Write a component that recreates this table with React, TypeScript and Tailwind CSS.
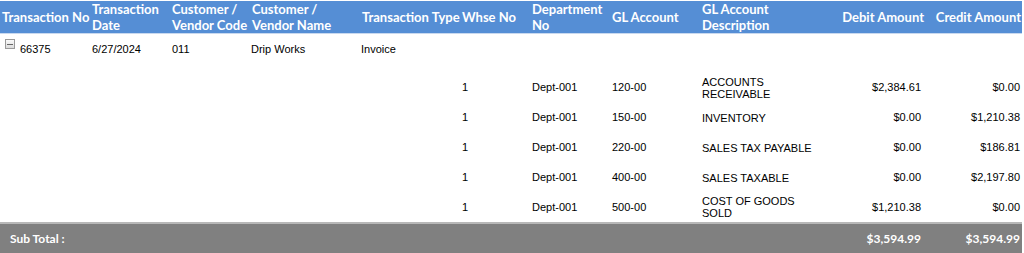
import React from 'react';

interface Line {
  whse: string;
  dept: string;
  gl: string;
  desc: string;
  debit: string;
  credit: string;
}

const lines: Line[] = [
  { whse: '1', dept: 'Dept-001', gl: '120-00', desc: 'ACCOUNTS RECEIVABLE', debit: '$2,384.61', credit: '$0.00' },
  { whse: '1', dept: 'Dept-001', gl: '150-00', desc: 'INVENTORY', debit: '$0.00', credit: '$1,210.38' },
  { whse: '1', dept: 'Dept-001', gl: '220-00', desc: 'SALES TAX PAYABLE', debit: '$0.00', credit: '$186.81' },
  { whse: '1', dept: 'Dept-001', gl: '400-00', desc: 'SALES TAXABLE', debit: '$0.00', credit: '$2,197.80' },
  { whse: '1', dept: 'Dept-001', gl: '500-00', desc: 'COST OF GOODS SOLD', debit: '$1,210.38', credit: '$0.00' },
];

const headers: { label: React.ReactNode; right?: boolean }[] = [
  { label: 'Transaction No' },
  { label: <>Transaction<br />Date</> },
  { label: <>Customer /<br />Vendor Code</> },
  { label: <>Customer /<br />Vendor Name</> },
  { label: 'Transaction Type' },
  { label: 'Whse No' },
  { label: <>Department<br />No</> },
  { label: 'GL Account' },
  { label: <>GL Account<br />Description</> },
  { label: 'Debit Amount', right: true },
  { label: 'Credit Amount', right: true },
];

const widths = ['w-[90px]', 'w-[80px]', 'w-[80px]', 'w-[110px]', 'w-[100px]', 'w-[70px]', 'w-[80px]', 'w-[90px]', 'w-[130px]', 'w-[95px]', 'w-[97px]'];

const CollapseIcon = () => (
  <span className="inline-flex items-center justify-center w-[10px] h-[10px] border border-[#9a9a9a] bg-gradient-to-b from-[#fafafa] to-[#dcdcdc] align-top mt-[-2px] mr-[5px]">
    <span className="block w-[6px] h-[1px] bg-[#666]" />
  </span>
);

export default function App() {
  return (
    <div className="w-[1024px] h-[253px] bg-white overflow-hidden font-['Liberation_Sans',Arial,sans-serif] text-[11px] text-black">
      <table className="table-fixed border-collapse w-[1022px]">
        <colgroup>
          {widths.map((w, i) => (
            <col key={i} className={w} />
          ))}
        </colgroup>
        <thead>
          <tr className="h-[33px] bg-[#558ed5] border-t border-white">
            {headers.map((h, i) => (
              <th
                key={i}
                className={`font-['Lato',sans-serif] font-bold text-[13px] leading-[16px] text-white whitespace-nowrap px-[2px] align-middle ${h.right ? 'text-right pr-[1px]' : 'text-left'}`}
              >
                {h.label}
              </th>
            ))}
          </tr>
        </thead>
        <tbody>
          <tr className="h-[39px] border-t border-[#c9d9ef]">
            <td className="align-top pt-[7px] pl-[5px] whitespace-nowrap">
              <CollapseIcon />
              66375
            </td>
            <td className="align-top pt-[7px] px-[2px]">6/27/2024</td>
            <td className="align-top pt-[7px] px-[2px]">011</td>
            <td className="align-top pt-[7px] px-[1px]">Drip Works</td>
            <td className="align-top pt-[7px] px-[1px]">Invoice</td>
            <td colSpan={6} />
          </tr>
          {lines.map((l, i) => (
            <tr key={i} className="h-[30px]">
              <td colSpan={5} />
              <td className="align-middle px-[2px]">{l.whse}</td>
              <td className="align-middle px-[2px]">{l.dept}</td>
              <td className="align-middle px-[2px]">{l.gl}</td>
              <td className="align-middle pl-[2px] pr-[12px] leading-[12px]">{l.desc}</td>
              <td className="align-middle text-right pr-[4px]">{l.debit}</td>
              <td className="align-middle text-right pr-[2px]">{l.credit}</td>
            </tr>
          ))}
          <tr className="h-[31px] bg-[#808080] border-t-2 border-[#b8b8b8] text-white font-['Lato',sans-serif] font-bold text-[12px]">
            <td colSpan={9} className="pl-[10px] align-middle">Sub Total :</td>
            <td className="text-right pr-[4px] align-middle">$3,594.99</td>
            <td className="text-right pr-[2px] align-middle">$3,594.99</td>
          </tr>
        </tbody>
      </table>
    </div>
  );
}
